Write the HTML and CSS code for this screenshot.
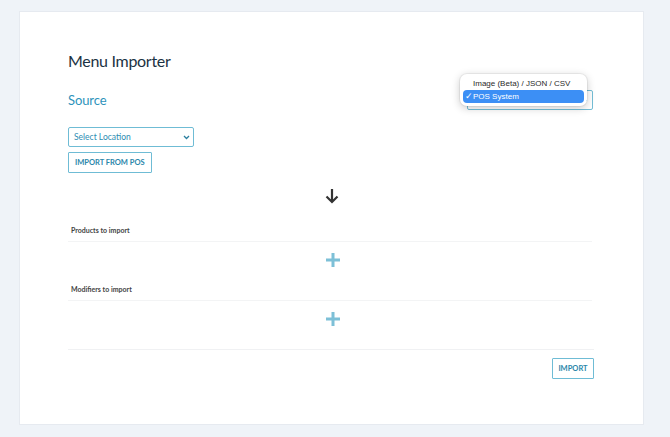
FILE: index.html
```html
<!DOCTYPE html>
<html lang="en">
<head>
    <meta charset="UTF-8">
    <meta name="viewport" content="width=device-width, initial-scale=1.0">
    <title>Menu Importer</title>
    <link rel="stylesheet" href="styles.css">
</head>
<body>
<div class="page">
    <div class="card">
        <h1 class="title">Menu Importer</h1>

        <div class="source-row">
            <h2 class="source-title">Source</h2>
            <div class="source-picker">
                <div class="source-select">
                    <span class="chevron">&#8964;</span>
                </div>
                <div class="popup">
                    <div class="popup-item">Image (Beta) / JSON / CSV</div>
                    <div class="popup-item selected"><span class="check">&#10003;</span>POS System</div>
                </div>
            </div>
        </div>

        <div class="location-select">
            <span>Select Location</span>
            <svg class="select-arrow" width="7" height="5" viewBox="0 0 7 5">
                <path d="M1 1 L3.5 3.5 L6 1" fill="none" stroke="#2b7f9f" stroke-width="1.3"/>
            </svg>
        </div>
        <div class="actions">
            <button class="btn">IMPORT FROM POS</button>
        </div>

        <div class="arrow-row">
            <svg width="14" height="16" viewBox="0 0 14 16">
                <path d="M7 1 L7 14 M1.5 8.5 L7 14 L12.5 8.5" fill="none" stroke="#333" stroke-width="2.2"/>
            </svg>
        </div>

        <div class="section">
            <div class="section-head">Products to import</div>
            <div class="dropzone">
                <svg width="14" height="14" viewBox="0 0 14 14">
                    <path d="M7 0 V14 M0 7 H14" stroke="#7dc0d7" stroke-width="3"/>
                </svg>
            </div>
        </div>

        <div class="section">
            <div class="section-head short">Modifiers to import</div>
            <div class="dropzone">
                <svg width="14" height="14" viewBox="0 0 14 14">
                    <path d="M7 0 V14 M0 7 H14" stroke="#7dc0d7" stroke-width="3"/>
                </svg>
            </div>
        </div>

        <div class="footer">
            <button class="btn">IMPORT</button>
        </div>
    </div>
</div>
</body>
</html>
```

FILE: styles.css
```css
* {
    box-sizing: border-box;
}

body {
    margin: 0;
    background-color: #eff3f8;
    font-family: Lato, "Open Sans", sans-serif;
}

.page {
    padding: 11px 26px 12px 19px;
}

.card {
    background-color: #ffffff;
    border: 1px solid #e6eaf0;
    height: 414px;
    padding: 38px 49px 0 48px;
}

.title {
    margin: 0;
    font-size: 16px;
    line-height: 22px;
    font-weight: 400;
    letter-spacing: -0.3px;
    color: #1b3243;
}

.source-row {
    margin-top: 18px;
    height: 20px;
    display: flex;
    justify-content: space-between;
    align-items: center;
}

.source-title {
    margin: 0;
    font-size: 13px;
    font-weight: 400;
    letter-spacing: -0.1px;
    color: #2e93bb;
}

.source-picker {
    position: relative;
    margin-right: 1px;
}

.source-select {
    width: 126px;
    height: 20px;
    border: 1px solid #74bed6;
    border-radius: 2px;
    display: flex;
    justify-content: flex-end;
    align-items: center;
    padding-right: 3px;
}

.chevron {
    font-size: 9px;
    line-height: 9px;
    color: #2b7f9f;
    margin-top: -4px;
}

.popup {
    position: absolute;
    top: -16px;
    left: -7px;
    width: 127px;
    padding: 3px;
    background-color: #ffffff;
    border-radius: 7px;
    box-shadow: 0 2px 9px rgba(0, 0, 0, 0.22), 0 0 0 1px rgba(0, 0, 0, 0.05);
    font-family: "Liberation Sans", Arial, sans-serif;
    font-size: 8px;
}

.popup-item {
    height: 13px;
    line-height: 13px;
    padding-left: 10px;
    color: #2a2a2a;
}

.popup-item.selected {
    background-color: #3c8ff5;
    color: #ffffff;
    border-radius: 4px;
    padding-left: 2px;
}

.check {
    display: inline-block;
    width: 8px;
    font-size: 9px;
}

.location-select {
    margin-top: 17px;
    width: 126px;
    height: 20px;
    border: 1px solid #6fbcd5;
    border-radius: 2px;
    display: flex;
    justify-content: space-between;
    align-items: center;
    padding: 0 3px 0 5px;
    font-size: 8.5px;
    color: #2c8db3;
}

.actions {
    margin-top: 5px;
    display: flex;
}

.btn {
    height: 21px;
    padding: 0 6px;
    background-color: #ffffff;
    border: 1px solid #6fbcd5;
    border-radius: 1px;
    font-family: Lato, "Open Sans", sans-serif;
    font-size: 7.5px;
    font-weight: 700;
    color: #2a86aa;
}

.arrow-row {
    height: 42px;
    padding-top: 4px;
    display: flex;
    justify-content: center;
    align-items: center;
    padding-left: 1px;
}

.section-head {
    height: 27px;
    display: flex;
    align-items: flex-end;
    padding: 0 0 7px 3px;
    font-size: 7px;
    font-weight: 700;
    color: #444444;
    border-bottom: 1px solid #f3f4f5;
    margin-right: 2px;
}

.section-head.short {
    height: 24px;
}

.dropzone {
    height: 35px;
    display: flex;
    justify-content: center;
    align-items: center;
    padding-left: 3px;
}

.footer {
    margin-top: 13px;
    border-top: 1px solid #f0f1f3;
    padding-top: 8px;
    display: flex;
    justify-content: flex-end;
}

.footer .btn {
    width: 42px;
    padding: 0;
}
```
